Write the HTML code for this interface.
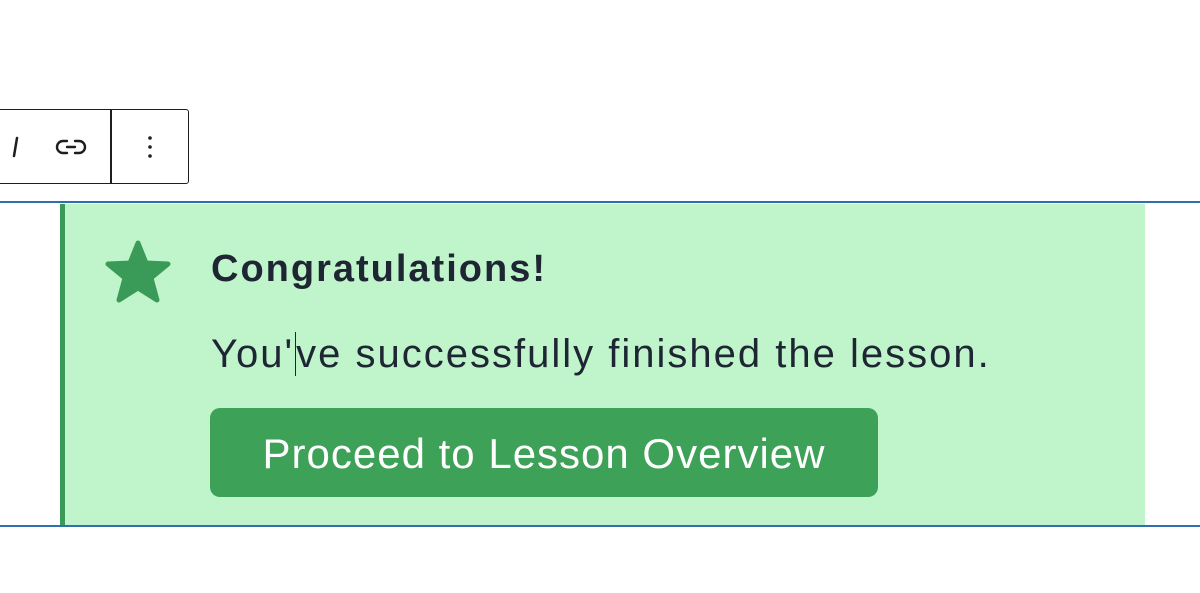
<!DOCTYPE html>
<html><head><style>
body{margin:0;width:1200px;height:593px;background:#fff;position:relative;overflow:hidden;font-family:"Liberation Sans",sans-serif}
.tb{position:absolute;left:-4px;top:109px;width:193px;height:75px;border:1.5px solid #1e1e1e;border-radius:3px;box-sizing:border-box}
.div{position:absolute;left:110px;top:109px;width:1.5px;height:75px;background:#1e1e1e}
.line{position:absolute;left:0;width:1200px;height:2px;background:#2f6fb0}
.box{position:absolute;left:60px;top:204px;width:1085px;height:321px;background:#c0f5cb;border-left:5px solid #3a9b58;box-sizing:border-box}
h1{position:absolute;left:211px;top:248px;margin:0;font-size:38px;font-weight:bold;color:#1e2633;letter-spacing:2px}
p{position:absolute;left:211px;top:332px;margin:0;font-size:40px;color:#1e2633;letter-spacing:2px}
.btn{position:absolute;left:210px;top:408px;width:668px;height:89px;background:#3da158;border-radius:10px;color:#fff;font-size:42px;line-height:92px;text-align:center;letter-spacing:1px}
</style></head><body>
<div class="tb"></div><div class="div"></div>
<svg style="position:absolute;left:0;top:120px" width="190" height="55">
<path d="M17 18 L14 36" stroke="#1e1e1e" stroke-width="2.5" stroke-linecap="round"/>
<path d="M67 21 h-4 a6 6 0 0 0 0 12 h4 M75 21 h4 a6 6 0 0 1 0 12 h-4 M67 27 h8" fill="none" stroke="#1e1e1e" stroke-width="2.4" stroke-linecap="round"/>
<circle cx="150" cy="18" r="1.8" fill="#1e1e1e"/><circle cx="150" cy="27" r="1.8" fill="#1e1e1e"/><circle cx="150" cy="36" r="1.8" fill="#1e1e1e"/>
</svg>
<div class="line" style="top:201px"></div>
<div class="box"></div>
<div class="line" style="top:525px"></div>
<svg style="position:absolute;left:104px;top:240px" width="68" height="66" viewBox="0 0 68 66">
<path d="M34 3 L42 23 L64 24 L47 38 L53 60 L34 48 L15 60 L21 38 L4 24 L26 23 Z" fill="#3a9b58" stroke="#3a9b58" stroke-width="5" stroke-linejoin="round"/>
</svg>
<h1>Congratulations!</h1>
<p>You'<span style="border-left:1.5px solid #1e2633;margin-left:1px"></span>ve successfully finished the lesson.</p>
<div class="btn">Proceed to Lesson Overview</div>
</body></html>
